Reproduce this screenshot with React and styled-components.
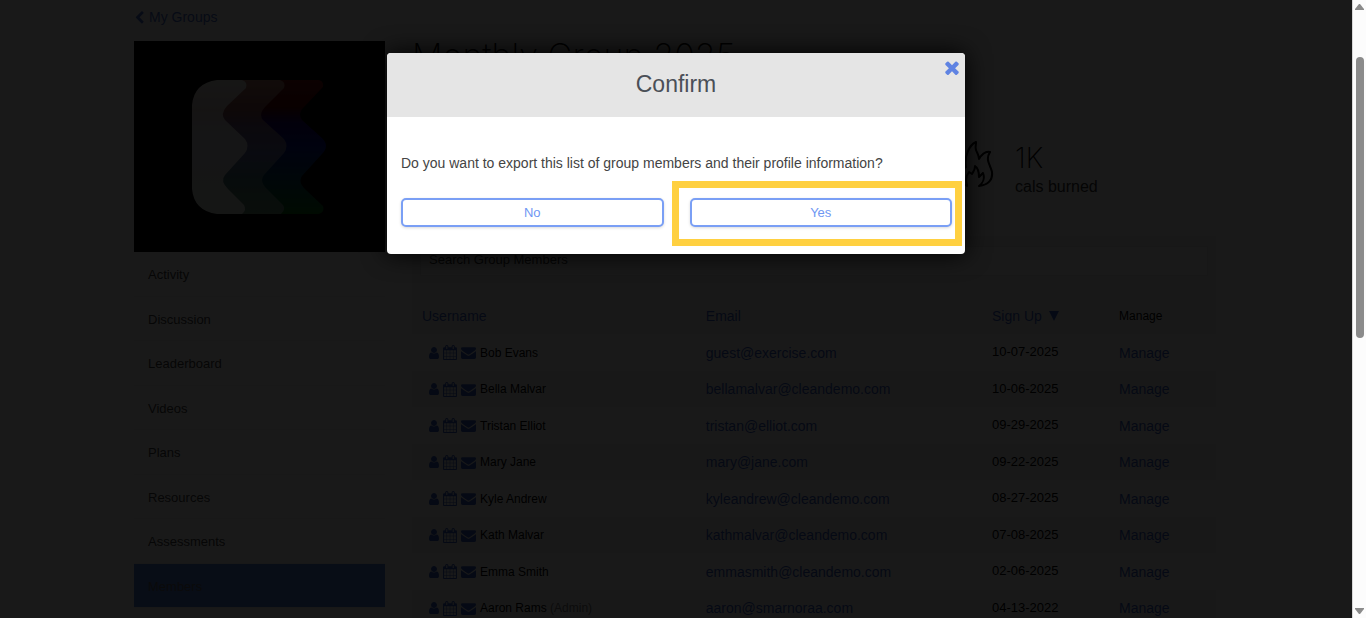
import React, { useState } from "react";
import styled, { createGlobalStyle } from "styled-components";

const ICONS = {
  user: "M1536 1399q0 109-62.5 187t-150.5 78h-854q-88 0-150.5-78t-62.5-187q0-85 8.5-160.5t31.5-152 58.5-131 94-89 134.5-34.5q131 128 313 128t313-128q76 0 134.5 34.5t94 89 58.5 131 31.5 152 8.5 160.5zm-256-887q0 159-112.5 271.5t-271.5 112.5-271.5-112.5-112.5-271.5 112.5-271.5 271.5-112.5 271.5 112.5 112.5 271.5z",
  calendar:
    "M192 1664h288v-288h-288v288zm352 0h320v-288h-320v288zm-352-352h288v-320h-288v320zm352 0h320v-320h-320v320zm-352-384h288v-288h-288v288zm736 736h320v-288h-320v288zm-384-736h320v-288h-320v288zm768 736h288v-288h-288v288zm-384-352h320v-320h-320v320zm-352-864v-288q0-13-9.5-22.5t-22.5-9.5h-64q-13 0-22.5 9.5t-9.5 22.5v288q0 13 9.5 22.5t22.5 9.5h64q13 0 22.5-9.5t9.5-22.5zm736 864h288v-320h-288v320zm-384-384h320v-288h-320v288zm384 0h288v-288h-288v288zm32-480v-288q0-13-9.5-22.5t-22.5-9.5h-64q-13 0-22.5 9.5t-9.5 22.5v288q0 13 9.5 22.5t22.5 9.5h64q13 0 22.5-9.5t9.5-22.5zm384-64v1280q0 52-38 90t-90 38h-1408q-52 0-90-38t-38-90v-1280q0-52 38-90t90-38h128v-96q0-66 47-113t113-47h64q66 0 113 47t47 113v96h384v-96q0-66 47-113t113-47h64q66 0 113 47t47 113v96h128q52 0 90 38t38 90z",
  envelope:
    "M1792 710v794q0 66-47 113t-113 47h-1472q-66 0-113-47t-47-113v-794q44 49 101 87 362 246 497 345 57 42 92.5 65.5t94.5 48 110 24.5h2q51 0 110-24.5t94.5-48 92.5-65.5q170-123 498-345 57-39 100-87zm0-294q0 79-49 151t-122 123q-376 261-468 325-10 7-42.5 31t-54 38.5-52 32.5-57.5 27-50 9h-2q-23 0-50-9t-57.5-27-52-32.5-54-38.5-42.5-31q-91-64-262-182.5t-205-142.5q-62-42-117-115.5t-55-136.5q0-78 41.5-130t118.5-52h1472q65 0 112.5 47t47.5 113z",
  times:
    "M1490 1322q0 40-28 68l-136 136q-28 28-68 28t-68-28l-294-294-294 294q-28 28-68 28t-68-28l-136-136q-28-28-28-68t28-68l294-294-294-294q-28-28-28-68t28-68l136-136q28-28 68-28t68 28l294 294 294-294q28-28 68-28t68 28l136 136q28 28 28 68t-28 68l-294 294 294 294q28 28 28 68z",
  chevronLeft:
    "M1427 301l-531 531 531 531q19 19 19 45t-19 45l-166 166q-19 19-45 19t-45-19l-742-742q-19-19-19-45t19-45l742-742q19-19 45-19t45 19l166 166q19 19 19 45t-19 45z",
};

const BOXES = {
  user: "256 0 1280 1792",
  calendar: "64 0 1664 1792",
  envelope: "0 0 1792 1792",
  times: "302 238 1188 1316",
  chevronLeft: "346 0 1100 1700",
};

const navItems = [
  "Activity",
  "Discussion",
  "Leaderboard",
  "Videos",
  "Plans",
  "Resources",
  "Assessments",
  "Members",
];

const members = [
  { name: "Bob Evans", email: "guest@exercise.com", date: "10-07-2025" },
  { name: "Bella Malvar", email: "bellamalvar@cleandemo.com", date: "10-06-2025" },
  { name: "Tristan Elliot", email: "tristan@elliot.com", date: "09-29-2025" },
  { name: "Mary Jane", email: "mary@jane.com", date: "09-22-2025" },
  { name: "Kyle Andrew", email: "kyleandrew@cleandemo.com", date: "08-27-2025" },
  { name: "Kath Malvar", email: "kathmalvar@cleandemo.com", date: "07-08-2025" },
  { name: "Emma Smith", email: "emmasmith@cleandemo.com", date: "02-06-2025" },
  { name: "Aaron Rams", email: "aaron@smarnoraa.com", date: "04-13-2022", admin: true },
];

const Icon = ({ name, width, height }) => (
  <svg width={width} height={height} viewBox={BOXES[name]} fill="currentColor" aria-hidden="true">
    <path d={ICONS[name]} />
  </svg>
);

const Logo = () => (
  <svg width="136" height="134" viewBox="0 0 136 134" aria-hidden="true">
    <defs>
      <linearGradient id="deep" x1="0" y1="0" x2="0" y2="1">
        <stop offset="0" stopColor="#7a1410" />
        <stop offset="0.2" stopColor="#5a0004" />
        <stop offset="0.32" stopColor="#1c0070" />
        <stop offset="0.5" stopColor="#001490" />
        <stop offset="0.72" stopColor="#004060" />
        <stop offset="1" stopColor="#006a10" />
      </linearGradient>
      <linearGradient id="mid" x1="0" y1="0" x2="0" y2="1">
        <stop offset="0" stopColor="#b07868" />
        <stop offset="0.22" stopColor="#8c5050" />
        <stop offset="0.34" stopColor="#705880" />
        <stop offset="0.55" stopColor="#6068a0" />
        <stop offset="0.75" stopColor="#487878" />
        <stop offset="1" stopColor="#648c70" />
      </linearGradient>
      <linearGradient id="pale" x1="0" y1="0" x2="0" y2="1">
        <stop offset="0" stopColor="#e0ded8" />
        <stop offset="0.22" stopColor="#d4c4c2" />
        <stop offset="0.4" stopColor="#d4d4dc" />
        <stop offset="1" stopColor="#d4dcd4" />
      </linearGradient>
    </defs>
    <path
      fill="url(#deep)"
      d="M60 0H127q5 1 4 7l-18 19q-8 7-3 14l20 18q8 8 0 16l-20 22q-4 6 3 13l18 17q2 6-4 8H60z"
    />
    <path
      fill="url(#mid)"
      d="M30 0H88q6 2 4 8L74 26q-8 8-3 14l21 19q5 7 0 14L72 95q-5 6 3 14l16 16q3 5-2 9H30z"
    />
    <path
      fill="url(#pale)"
      d="M25 0H50q6 2 4 8L35 26q-7 8-2 14l20 19q5 7 0 14L33 95q-5 6 3 14l16 16q3 5-2 9H25Q2 131 0 109V25Q2 3 25 0z"
    />
  </svg>
);

const Flame = () => (
  <svg
    width="36"
    height="46"
    viewBox="0 0 36 46"
    fill="none"
    stroke="#000"
    strokeWidth="2"
    strokeLinejoin="round"
    strokeLinecap="round"
    aria-hidden="true"
  >
    <path d="M9 45C2 41 0 32 4 23c1 3 2 5 4 3C6 16 11 4 18 1c0 4-1 5 0 8s3 5 3 9c3-5 7-8 11-7-5 8 0 12 2 20 1 8-4 13-13 14 4-3 6-8 4-13l-4 4c0-5-1-9-4-11 0 5-2 5-3 8l-3-2c-4 5-3 10-2 13z" />
  </svg>
);

const App = () => {
  const [showConfirm, setShowConfirm] = useState(true);
  const [search, setSearch] = useState("");

  const close = () => setShowConfirm(false);

  return (
    <>
      <GlobalStyle />
      <Shell>
        <Page>
          <Content>
            <BackLink href="#groups">
              <Icon name="chevronLeft" width={9} height={13} />
              My Groups
            </BackLink>
            <Columns>
              <Sidebar>
                <Cover>
                  <Logo />
                </Cover>
                <Nav>
                  {navItems.map((item) => (
                    <NavLink key={item} href={`#${item.toLowerCase()}`} $active={item === "Members"}>
                      {item}
                    </NavLink>
                  ))}
                </Nav>
              </Sidebar>
              <Main>
                <Title>Monthly Group 2025</Title>
                <Stats>
                  <Stat>
                    <Flame />
                    <div>
                      <StatValue>1K</StatValue>
                      <StatLabel>cals burned</StatLabel>
                    </div>
                  </Stat>
                </Stats>
                <SearchPanel>
                  <SearchInput
                    type="text"
                    aria-label="Search Group Members"
                    placeholder="Search Group Members"
                    value={search}
                    onChange={({ target }) => setSearch(target.value)}
                  />
                </SearchPanel>
                <Table>
                  <thead>
                    <tr>
                      <HeadCell $width="35.3%">
                        <TextLink href="#username">Username</TextLink>
                      </HeadCell>
                      <HeadCell $width="35.6%">
                        <TextLink href="#email">Email</TextLink>
                      </HeadCell>
                      <HeadCell $width="15.8%">
                        <SortLink href="#signup">
                          Sign Up
                          <SortArrow viewBox="0 0 10 10" aria-hidden="true">
                            <path d="M0 0h10L5 10z" />
                          </SortArrow>
                        </SortLink>
                      </HeadCell>
                      <HeadCell>Manage</HeadCell>
                    </tr>
                  </thead>
                  <tbody>
                    {members.map((member) => (
                      <Row key={member.email}>
                        <Cell>
                          <Member>
                            <IconLink href="#profile" aria-label="Profile">
                              <Icon name="user" width={10} height={14} />
                            </IconLink>
                            <IconLink href="#calendar" aria-label="Calendar">
                              <Icon name="calendar" width={14} height={15} />
                            </IconLink>
                            <IconLink href="#message" aria-label="Message">
                              <Icon name="envelope" width={15} height={15} />
                            </IconLink>
                            <span>
                              {member.name} {member.admin && <Role>(Admin)</Role>}
                            </span>
                          </Member>
                        </Cell>
                        <Cell>
                          <TextLink href={`mailto:${member.email}`}>{member.email}</TextLink>
                        </Cell>
                        <DateCell>{member.date}</DateCell>
                        <Cell>
                          <TextLink href="#manage">Manage</TextLink>
                        </Cell>
                      </Row>
                    ))}
                  </tbody>
                </Table>
              </Main>
            </Columns>
          </Content>
          {showConfirm && (
            <Overlay>
              <Modal role="dialog" aria-modal="true" aria-labelledby="confirm-title">
                <ModalHeader>
                  <ModalTitle id="confirm-title">Confirm</ModalTitle>
                  <CloseButton type="button" aria-label="Close" onClick={close}>
                    <Icon name="times" width={14} height={15} />
                  </CloseButton>
                </ModalHeader>
                <ModalBody>
                  <Question>
                    Do you want to export this list of group members and their profile information?
                  </Question>
                  <Actions>
                    <ActionButton type="button" onClick={close}>
                      No
                    </ActionButton>
                    <Highlight>
                      <ActionButton type="button" onClick={close}>
                        Yes
                      </ActionButton>
                    </Highlight>
                  </Actions>
                </ModalBody>
              </Modal>
            </Overlay>
          )}
        </Page>
        <ScrollTrack aria-hidden="true">
          <Arrow viewBox="0 0 9 6">
            <path d="M4 0h1l4 5v1H0V5z" />
          </Arrow>
          <ScrollRail>
            <ScrollThumb />
          </ScrollRail>
          <Arrow viewBox="0 0 9 6">
            <path d="M4 6h1l4-5V0H0v1z" />
          </Arrow>
        </ScrollTrack>
      </Shell>
    </>
  );
};

const GlobalStyle = createGlobalStyle`
  * {
    box-sizing: border-box;
  }

  body {
    margin: 0;
    background: #fff;
    color: #000;
    font-family: "Liberation Sans", Arial, sans-serif;
    font-size: 14px;
  }

  svg {
    display: block;
    flex: none;
  }
`;

const Shell = styled.div`
  display: flex;
  height: 100vh;
  overflow: hidden;
`;

const Page = styled.div`
  position: relative;
  flex: 1;
  overflow: hidden;
`;

const Content = styled.div`
  padding: 0 136px 0 134px;
`;

const BackLink = styled.a`
  display: flex;
  align-items: center;
  gap: 5px;
  height: 34px;
  padding-left: 1px;
  color: #4a6fd0;
  text-decoration: none;
`;

const Columns = styled.div`
  display: flex;
  align-items: flex-start;
  gap: 27px;
`;

const Sidebar = styled.aside`
  flex: 0 0 251px;
  padding-top: 7px;
`;

const Cover = styled.div`
  display: flex;
  align-items: center;
  justify-content: center;
  height: 211px;
  background: #000;
`;

const Nav = styled.nav`
  display: grid;
  grid-auto-rows: 1fr;
  height: 356px;
`;

const NavLink = styled.a`
  display: flex;
  align-items: center;
  padding: 2px 14px 0;
  border-bottom: 1px solid #f0f0f0;
  background: ${({ $active }) => ($active ? "#5080e0" : "transparent")};
  color: ${({ $active }) => ($active ? "#6a6a6a" : "#444")};
  font-size: 13px;
  text-decoration: none;
`;

const Main = styled.main`
  flex: 1;
  min-width: 0;
`;

const Title = styled.h1`
  margin: 0;
  font-family: Inter, "Liberation Sans", sans-serif;
  font-size: 34px;
  font-weight: 200;
  line-height: 44px;
`;

const Stats = styled.div`
  display: grid;
  grid-template-columns: repeat(3, 1fr);
  padding: 63px 0 37px;
`;

const Stat = styled.div`
  grid-column: 3;
  display: flex;
  align-items: flex-start;
  gap: 21px;
  padding-left: 10px;
`;

const StatValue = styled.div`
  font-family: Inter, "Liberation Sans", sans-serif;
  font-size: 28px;
  font-weight: 200;
  line-height: 34px;
`;

const StatLabel = styled.div`
  color: #333;
  font-size: 16px;
  line-height: 24px;
`;

const SearchPanel = styled.div`
  padding: 10px 8px 22px;
  background: #f6f6f6;
`;

const SearchInput = styled.input`
  display: block;
  width: 100%;
  height: 30px;
  padding: 0 8px 4px;
  border: 1px solid #e8e8e8;
  background: #fff;
  font: inherit;
  font-size: 13px;

  &::placeholder {
    color: #333;
    opacity: 1;
  }
`;

const Table = styled.table`
  width: 100%;
  border-collapse: collapse;
  table-layout: fixed;
`;

const HeadCell = styled.th`
  width: ${({ $width }) => $width || "auto"};
  height: 36px;
  padding: 0 10px;
  background: #f6f6f6;
  font-size: 12px;
  font-weight: 400;
  text-align: left;
`;

const Row = styled.tr`
  height: 37px;

  &:nth-child(even) {
    height: 36px;
    background: #f6f6f6;
  }
`;

const Cell = styled.td`
  padding: 0 10px;
  font-size: 12px;
  white-space: nowrap;
`;

const DateCell = styled(Cell)`
  padding-bottom: 2px;
  font-size: 13px;
`;

const Member = styled.div`
  display: flex;
  align-items: center;
  gap: 4px;
  padding-left: 7px;
`;

const IconLink = styled.a`
  color: #3a62c8;
`;

const TextLink = styled.a`
  color: #3a62c8;
  font-size: 14px;
  text-decoration: none;
`;

const SortLink = styled(TextLink)`
  display: flex;
  align-items: center;
  gap: 7px;
`;

const SortArrow = styled.svg`
  width: 10px;
  height: 10px;
  fill: currentColor;
`;

const Role = styled.span`
  color: #777;
`;

const Overlay = styled.div`
  position: absolute;
  inset: 0;
  display: flex;
  align-items: flex-start;
  justify-content: center;
  padding-top: 53px;
  background: rgba(0, 0, 0, 0.9);
`;

const Modal = styled.section`
  width: 578px;
  border-radius: 4px;
  background: #fff;
  box-shadow: 0 0 24px #000;
`;

const ModalHeader = styled.header`
  position: relative;
  padding: 15px 0 17px;
  border-radius: 4px 4px 0 0;
  background: #e5e5e5;
`;

const ModalTitle = styled.h2`
  margin: 0;
  color: #4a4f57;
  font-size: 23px;
  font-weight: 400;
  line-height: 32px;
  text-align: center;
`;

const CloseButton = styled.button`
  position: absolute;
  top: 7px;
  right: 6px;
  padding: 0;
  border: 0;
  background: none;
  color: #5f83e2;
  cursor: pointer;
`;

const ModalBody = styled.div`
  padding: 36px 13px 27px 14px;
`;

const Question = styled.p`
  margin: 0 0 25px;
  color: #444;
  font-size: 14px;
  line-height: 20px;
`;

const Actions = styled.div`
  display: grid;
  grid-template-columns: 1fr 1fr;
  gap: 26px;
`;

const ActionButton = styled.button`
  width: 100%;
  height: 29px;
  padding: 0;
  border: 2px solid #7a9ff5;
  border-radius: 5px;
  background: #fff;
  box-shadow: 0 1px 3px rgba(0, 0, 0, 0.15);
  color: #6f97f3;
  font: inherit;
  font-size: 13px;
  cursor: pointer;
`;

const Highlight = styled.div`
  position: relative;

  &::after {
    content: "";
    position: absolute;
    inset: -17px -10px -19px -18px;
    border: 7px solid #ffd040;
    pointer-events: none;
  }
`;

const ScrollTrack = styled.div`
  display: flex;
  flex: 0 0 14px;
  flex-direction: column;
  align-items: center;
  padding: 4px 0;
  border-left: 1px solid #d8d8d8;
  background: #fcfcfc;
`;

const Arrow = styled.svg`
  width: 9px;
  height: 6px;
  fill: #8b8b8b;
`;

const ScrollRail = styled.div`
  flex: 1;
  padding-top: 47px;
`;

const ScrollThumb = styled.div`
  width: 8px;
  height: 51%;
  border-radius: 4px;
  background: #8b8b8b;
`;

export default App;
